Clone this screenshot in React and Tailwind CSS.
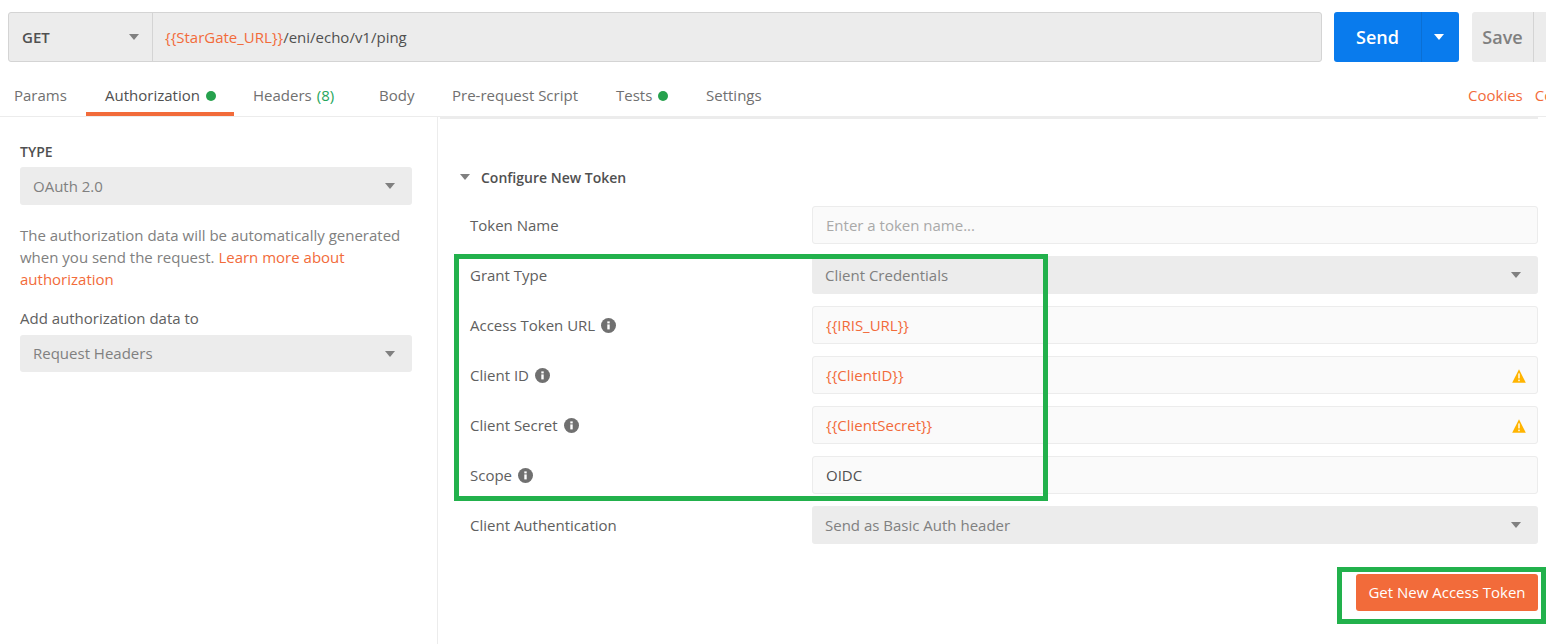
import { Fragment } from 'react';

const Caret = ({ className = 'border-t-[#808080]' }) => (
  <span className={`w-0 h-0 border-x-[5px] border-x-transparent border-t-[6px] ${className}`} />
);

const Info = () => (
  <svg width="15" height="15" viewBox="0 0 15 15" className="ml-[6px] shrink-0">
    <circle cx="7.5" cy="7.5" r="7.5" fill="#707070" />
    <rect x="6.3" y="6.4" width="2.4" height="5" fill="#fff" />
    <rect x="6.3" y="3.4" width="2.4" height="2" fill="#fff" />
  </svg>
);

const Warn = () => (
  <svg width="14" height="14" viewBox="0 0 14 14" className="shrink-0 mt-[1px]">
    <path d="M7 0.3 L13.8 13.7 L0.2 13.7 Z" fill="#ffb400" strokeLinejoin="round" />
    <rect x="6.3" y="4.4" width="1.4" height="5" fill="#fff" />
    <rect x="6.3" y="10.6" width="1.4" height="1.6" fill="#fff" />
  </svg>
);

const Select = ({ value, className = '' }) => (
  <div className={`bg-[#ececec] rounded-[3px] flex items-center justify-between pl-[13px] pr-[17px] text-[#808080] ${className}`}>
    <span>{value}</span>
    <Caret />
  </div>
);

const Input = ({ children, warn }) => (
  <div className="h-[38px] w-[726px] bg-[#fafafa] border border-[#ececec] rounded-[3px] flex items-center justify-between pl-[13px] pr-[11px]">
    {children}
    {warn && <Warn />}
  </div>
);

const rows = [
  { label: 'Token Name', field: <Input><span className="text-[#a9a9a9]">Enter a token name...</span></Input> },
  { label: 'Grant Type', field: <Select value="Client Credentials" className="w-[726px] h-[38px]" /> },
  { label: 'Access Token URL', info: true, field: <Input><span className="text-[#f26b3a]">{'{{IRIS_URL}}'}</span></Input> },
  { label: 'Client ID', info: true, field: <Input warn><span className="text-[#f26b3a]">{'{{ClientID}}'}</span></Input> },
  { label: 'Client Secret', info: true, field: <Input warn><span className="text-[#f26b3a]">{'{{ClientSecret}}'}</span></Input> },
  { label: 'Scope', info: true, field: <Input><span className="text-[#505050]">OIDC</span></Input> },
  { label: 'Client Authentication', field: <Select value="Send as Basic Auth header" className="w-[726px] h-[38px]" /> },
];

const tabs = [
  { name: 'Params', w: 'w-[86px] pl-[14px]' },
  { name: 'Authorization', w: 'w-[148px] pl-[19px]', active: true, dot: true },
  { name: 'Headers', w: 'w-[126px] pl-[19px]', count: '(8)' },
  { name: 'Body', w: 'w-[73px] pl-[19px]' },
  { name: 'Pre-request Script', w: 'w-[164px] pl-[19px]' },
  { name: 'Tests', w: 'w-[90px] pl-[19px]', dot: true },
  { name: 'Settings', w: 'w-[90px] pl-[19px]' },
];

export default function App() {
  return (
    <div className="relative w-[1546px] h-[644px] overflow-hidden bg-white text-[15px] text-[#505050]" style={{ fontFamily: '"Open Sans", sans-serif' }}>
      {/* request bar */}
      <div className="flex pt-[12px] pl-[8px] h-[62px]">
        <div className="w-[1314px] shrink-0 h-[50px] flex bg-[#ececec] border border-[#d4d4d4] rounded-[3px]">
          <div className="w-[144px] shrink-0 flex items-center justify-between pl-[13px] pr-[13px] border-r border-[#d4d4d4] font-semibold">
            <span>GET</span>
            <Caret />
          </div>
          <div className="flex items-center pl-[12px] text-[#505050]">
            <span className="text-[#f26b3a]">{'{{StarGate_URL}}'}</span>/eni/echo/v1/ping
          </div>
        </div>
        <div className="ml-[12px] w-[125px] shrink-0 h-[50px] flex bg-[#097bed] rounded-[3px] text-white">
          <div className="w-[87px] flex items-center justify-center text-[18px] font-semibold">Send</div>
          <div className="flex-1 flex items-center justify-center pr-[3px] border-l border-[#0a6fd4]">
            <Caret className="border-t-white" />
          </div>
        </div>
        <div className="ml-[13px] w-[90px] h-[50px] shrink-0 flex bg-[#ececec] rounded-[3px] text-[#808080]">
          <div className="w-[62px] flex items-center justify-center text-[18px] font-semibold border-r border-[#d4d4d4]">Save</div>
        </div>
      </div>

      {/* tabs */}
      <div className="h-[55px] pt-[10px] flex border-b border-[#ececec]">
        {tabs.map((t) => (
          <div key={t.name} className={`${t.w} h-[44px] shrink-0 flex items-center ${t.active ? 'border-b-4 border-[#f26b3a] pt-[7px]' : 'pt-[3px] text-[#707070]'}`}>
            <span className={t.active ? 'text-[#505050]' : ''}>{t.name}</span>
            {t.count && <span className="ml-[5px] text-[#26a65b]">{t.count}</span>}
            {t.dot && <span className="ml-[6px] w-[10px] h-[10px] rounded-full bg-[#26a14d]" />}
          </div>
        ))}
        <div className="flex-1 h-[44px] pt-[3px] flex items-center justify-end text-[#f26b3a]">
          <div className="w-[78px] flex whitespace-nowrap overflow-hidden">
            <span>Cookies</span>
            <span className="ml-[12px]">Code</span>
          </div>
        </div>
      </div>

      <div className="flex h-[527px]">
        {/* left panel */}
        <div className="w-[438px] shrink-0 border-r border-[#ececec] pl-[20px] pr-[25px] pt-[25px]">
          <div className="text-[14px] font-semibold leading-[20px]">TYPE</div>
          <Select value="OAuth 2.0" className="mt-[5px] h-[38px]" />
          <p className="mt-[19px] leading-[22px] text-[#808080] w-[392px]">
            The authorization data will be automatically generated when you send the request. <span className="text-[#f26b3a]">Learn more about authorization</span>
          </p>
          <div className="mt-[17px] leading-[22px] text-[#606060]">Add authorization data to</div>
          <Select value="Request Headers" className="mt-[6px] h-[37px]" />
        </div>

        {/* right panel */}
        <div className="flex-1 min-w-0 relative">
          <div className="ml-[2px] mr-[8px] h-[2px] bg-[#ececec]" />
          <div className="flex items-center pl-[22px] mt-[48px] h-[20px] font-semibold text-[14px] text-[#505050]">
            <Caret />
            <span className="ml-[11px]">Configure New Token</span>
          </div>
          <div className="mt-[19px] ml-[32px] grid grid-cols-[342px_726px] gap-y-[12px] items-center">
            {rows.map((r) => (
              <Fragment key={r.label}>
                <div className="flex items-center text-[#606060]">
                  {r.label}
                  {r.info && <Info />}
                </div>
                {r.field}
              </Fragment>
            ))}
          </div>
          <div className="flex justify-end mt-[30px] mr-[8px]">
            <button className="w-[182px] h-[37px] bg-[#f26b3a] text-white rounded-[3px]">Get New Access Token</button>
          </div>
        </div>
      </div>

      {/* annotation boxes */}
      <div className="absolute left-[454px] top-[254px] w-[594px] h-[247px] border-[5px] border-[#22b14c]" />
      <div className="absolute left-[1337px] top-[567px] w-[209px] h-[57px] border-[5px] border-[#22b14c]" />
    </div>
  );
}
